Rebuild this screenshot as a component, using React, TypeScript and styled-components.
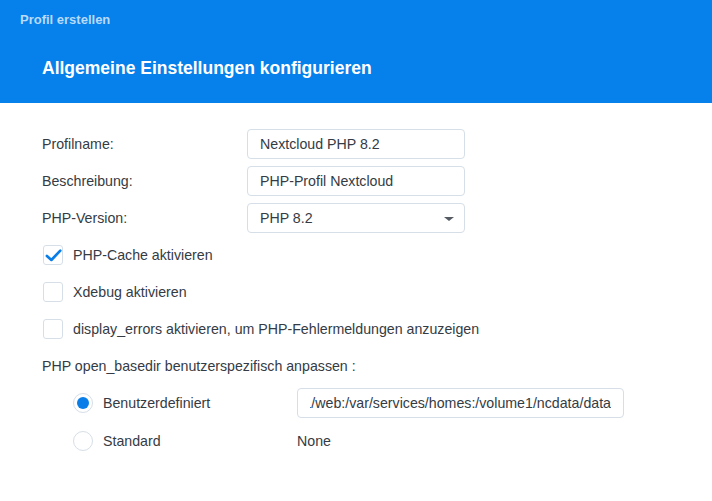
import styled, { createGlobalStyle } from "styled-components";

const GlobalStyle = createGlobalStyle`
  html, body {
    margin: 0;
    padding: 0;
    background: #ffffff;
  }
  body {
    font-family: "Liberation Sans", Arial, sans-serif;
  }
`;

const Page = styled.div`
  width: 712px;
  height: 501px;
  background: #ffffff;
  overflow: hidden;
`;

const Header = styled.header`
  display: flex;
  flex-direction: column;
  height: 103px;
  box-sizing: border-box;
  padding: 12px 20px 0 20px;
  background-color: #0680ea;
`;

const Caption = styled.div`
  font-size: 13px;
  font-weight: 700;
  line-height: 16px;
  color: rgba(255, 255, 255, 0.72);
`;

const Title = styled.h1`
  margin: 28px 0 0 22px;
  font-size: 17.5px;
  font-weight: 700;
  line-height: 24px;
  color: #ffffff;
`;

const Body = styled.div`
  display: flex;
  flex-direction: column;
  padding: 26px 0 0 42px;
  color: #353b44;
  font-size: 14.2px;
`;

const FieldRow = styled.div`
  display: flex;
  align-items: center;
  height: 30px;
  margin-bottom: 7px;
`;

const Label = styled.label`
  width: 205px;
  flex-shrink: 0;
`;

const TextBox = styled.div<{ width: number }>`
  position: relative;
  display: flex;
  align-items: center;
  box-sizing: border-box;
  width: ${({ width }) => width}px;
  height: 30px;
  padding: 0 12px;
  border: 1px solid #d6dee7;
  border-radius: 4px;
  background: #ffffff;
  white-space: nowrap;
  overflow: hidden;
`;

/* keeps the end of a long value in view, cut at the left padding */
const TailValue = styled.div`
  display: flex;
  justify-content: flex-end;
  width: 100%;
  overflow: hidden;

  span {
    flex-shrink: 0;
  }
`;

const Caret = styled.span`
  position: absolute;
  right: 10px;
  top: 13px;
  width: 0;
  height: 0;
  border-left: 5px solid transparent;
  border-right: 5px solid transparent;
  border-top: 4px solid #555b63;
`;

const Checks = styled.div`
  display: flex;
  flex-direction: column;
  gap: 17px;
  margin-top: 5px;
`;

const CheckRow = styled.div`
  display: flex;
  align-items: center;
  gap: 10px;
  height: 20px;
`;

const Box = styled.span`
  display: flex;
  align-items: center;
  justify-content: center;
  box-sizing: border-box;
  width: 20px;
  height: 20px;
  margin-left: 1px;
  border: 1px solid #d6dee7;
  border-radius: 3px;
  color: #0a7ee8;
`;

const SectionLabel = styled.div`
  margin-top: 17px;
  line-height: 20px;
`;

const RadioRow = styled.div<{ first?: boolean }>`
  display: flex;
  align-items: center;
  height: 30px;
  margin-left: 31px;
  margin-top: ${({ first }) => (first ? 12 : 8)}px;
`;

const RadioLabel = styled.div`
  display: flex;
  align-items: center;
  gap: 10px;
  width: 224px;
  flex-shrink: 0;
`;

const Radio = styled.span<{ checked?: boolean }>`
  display: flex;
  align-items: center;
  justify-content: center;
  box-sizing: border-box;
  width: 20px;
  height: 20px;
  border: 1px solid #d6dee7;
  border-radius: 50%;

  &::after {
    content: "";
    display: ${({ checked }) => (checked ? "block" : "none")};
    width: 12px;
    height: 12px;
    border-radius: 50%;
    background: #0a7ee8;
  }
`;

const CheckMark = () => (
  <svg width="17" height="17" viewBox="0 0 16 16" fill="none">
    <path
      d="M1.8 8.4 L6 12.2 L14.4 3.4"
      stroke="currentColor"
      strokeWidth="2.5"
      strokeLinecap="round"
      strokeLinejoin="round"
    />
  </svg>
);

const checks = [
  { text: "PHP-Cache aktivieren", checked: true },
  { text: "Xdebug aktivieren", checked: false },
  {
    text: "display_errors aktivieren, um PHP-Fehlermeldungen anzuzeigen",
    checked: false,
  },
];

export default function App() {
  return (
    <Page>
      <GlobalStyle />
      <Header>
        <Caption>Profil erstellen</Caption>
        <Title>Allgemeine Einstellungen konfigurieren</Title>
      </Header>
      <Body>
        <FieldRow>
          <Label>Profilname:</Label>
          <TextBox width={218}>Nextcloud PHP 8.2</TextBox>
        </FieldRow>
        <FieldRow>
          <Label>Beschreibung:</Label>
          <TextBox width={218}>PHP-Profil Nextcloud</TextBox>
        </FieldRow>
        <FieldRow>
          <Label>PHP-Version:</Label>
          <TextBox width={218}>
            PHP 8.2
            <Caret />
          </TextBox>
        </FieldRow>
        <Checks>
          {checks.map((c) => (
            <CheckRow key={c.text}>
              <Box>{c.checked && <CheckMark />}</Box>
              <span>{c.text}</span>
            </CheckRow>
          ))}
        </Checks>
        <SectionLabel>PHP open_basedir benutzerspezifisch anpassen :</SectionLabel>
        <RadioRow first>
          <RadioLabel>
            <Radio checked />
            Benutzerdefiniert
          </RadioLabel>
          <TextBox width={327}>
            <TailValue>
              <span>/volume1/web:/var/services/homes:/volume1/ncdata/data</span>
            </TailValue>
          </TextBox>
        </RadioRow>
        <RadioRow>
          <RadioLabel>
            <Radio />
            Standard
          </RadioLabel>
          <span>None</span>
        </RadioRow>
      </Body>
    </Page>
  );
}
